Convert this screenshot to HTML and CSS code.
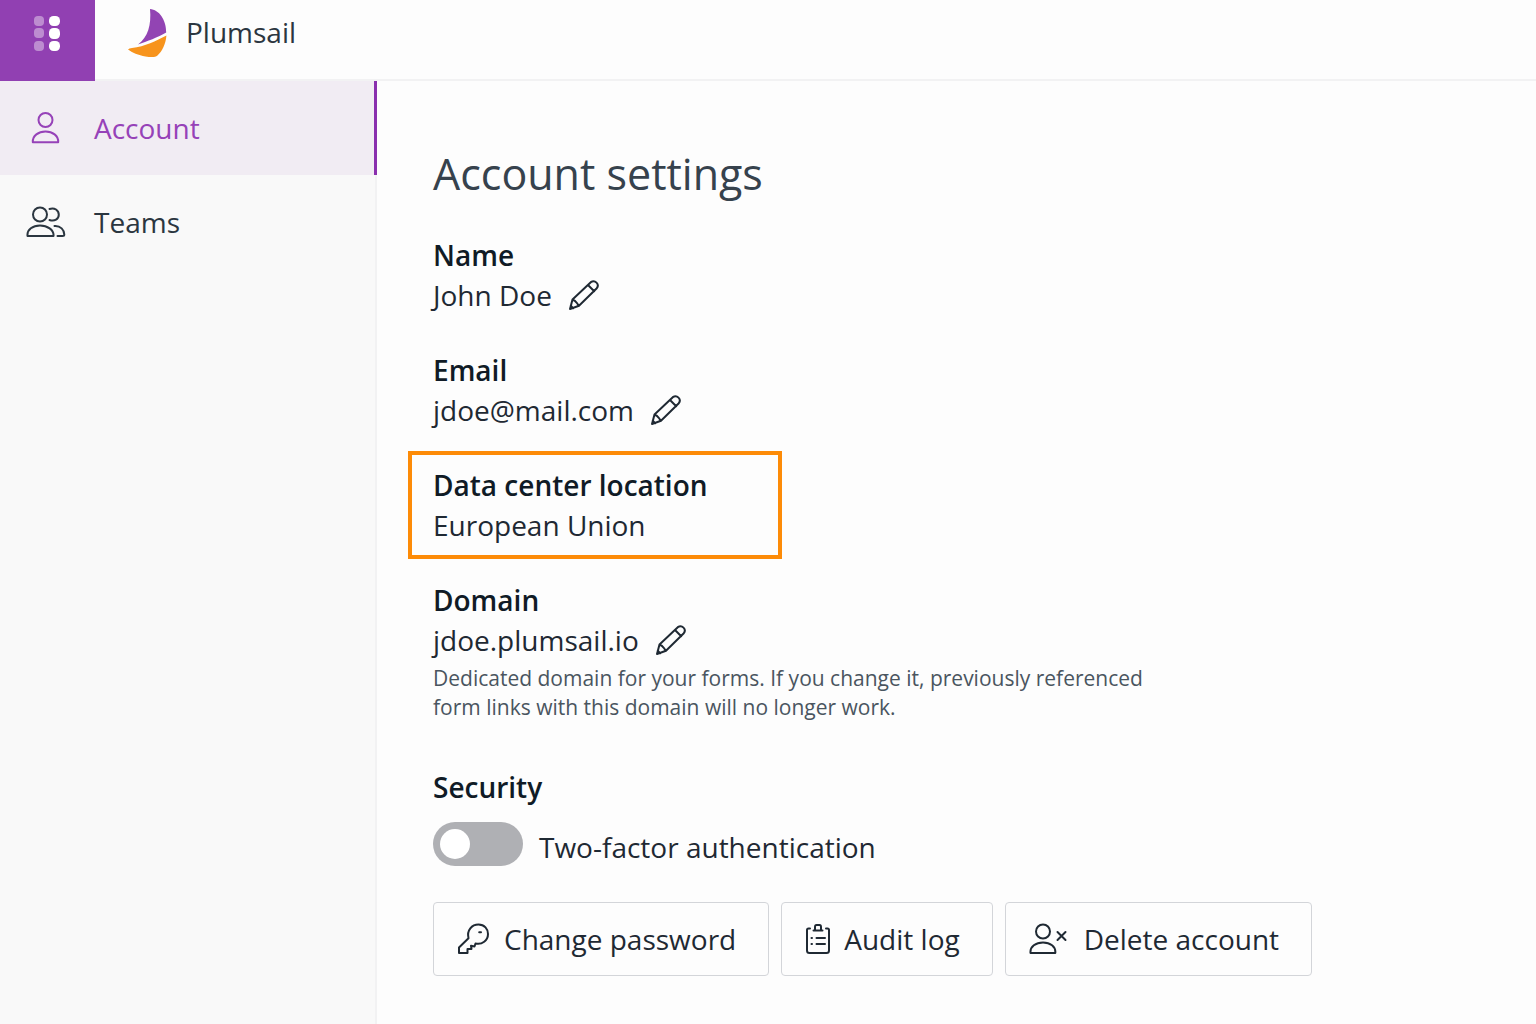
FILE: index.html
```html
<!DOCTYPE html>
<html lang="en">
<head>
<meta charset="utf-8">
<meta name="viewport" content="width=device-width, initial-scale=1">
<title>Account settings - Plumsail</title>
<link rel="stylesheet" href="styles.css">
</head>
<body>
<div class="app">
  <header class="topbar">
    <button class="launcher" type="button" aria-label="Apps">
      <svg width="28" height="36" viewBox="0 0 28 36" fill="#fff" aria-hidden="true">
        <g opacity=".4"><rect x="1" y="0" width="10" height="10" rx="4"/><rect x="1" y="12" width="10" height="10" rx="4"/><rect x="1" y="25" width="10" height="10" rx="4"/></g>
        <rect x="16" y="0" width="11" height="10" rx="4.500"/><rect x="16" y="12" width="11" height="11" rx="4.500"/><rect x="16" y="25" width="11" height="10" rx="4.500"/>
      </svg>
    </button>
    <a class="brand" href="#">
      <svg width="40" height="50" viewBox="0 0 40 50" aria-hidden="true">
        <path d="M22 1C31 1.500 38.500 12 38.200 24.600C30 29.500 19 33.500 10 36.400C20 29 23.500 17 22 1Z" fill="#9244b3"/>
        <path d="M38.400 27.500C37.800 36 34 43.500 29.500 47.500C27 49.700 22 49 17.500 48.400C10.500 47.500 4 44.500 0 41.500Q1 40.300 4 40C17 38.500 28 33 38.400 27.500Z" fill="#f7941d"/>
      </svg>
      <span>Plumsail</span>
    </a>
  </header>
  <nav class="sidebar" aria-label="Main">
    <a class="nav-item active" href="#" aria-current="page">
      <svg class="nav-icon" width="40" height="32" viewBox="0 0 40 32" aria-hidden="true"><circle cx="19.500" cy="8" r="7"/><path d="M6.800 30.200C6.400 23.500 12.500 19.500 19.500 19.500S32.600 23.500 32.200 30.200Z"/></svg>
      <span>Account</span>
    </a>
    <a class="nav-item" href="#">
      <svg class="nav-icon" width="40" height="32" viewBox="0 0 40 32" aria-hidden="true"><circle cx="14" cy="8.500" r="7"/><path d="M1.500 30C.8 23.500 7 19.500 14 19.500S28.200 23.500 27.500 30Z"/><path d="M23.500 3C28.500 1 32.800 4.500 32.800 8.800C32.800 13 28.500 15.800 23.500 14M28.500 20C34.500 19.500 38.300 24 38.300 28.500Q38.300 30 36.500 30H31.500"/></svg>
      <span>Teams</span>
    </a>
  </nav>
  <main class="content">
    <h1>Account settings</h1>
    <dl class="fields">
      <div class="field">
        <dt>Name</dt>
        <dd><span>John Doe</span><button class="edit" type="button" aria-label="Edit name"><svg width="32" height="32" viewBox="0 0 32 32" aria-hidden="true"><path d="M2 30L4.500 20.500L22.800 3.200C27 .5 31.800 5 28.800 9.200L11 26.800ZM20 6L26.200 12.200M4.500 20.500C8 21.500 8 23 11 26.800M2.800 26.800L5.200 29.200"/></svg></button></dd>
      </div>
      <div class="field">
        <dt>Email</dt>
        <dd><span>jdoe@mail.com</span><button class="edit" type="button" aria-label="Edit email"><svg width="32" height="32" viewBox="0 0 32 32" aria-hidden="true"><path d="M2 30L4.500 20.500L22.800 3.200C27 .5 31.800 5 28.800 9.200L11 26.800ZM20 6L26.200 12.200M4.500 20.500C8 21.500 8 23 11 26.800M2.800 26.800L5.200 29.200"/></svg></button></dd>
      </div>
      <div class="field highlighted">
        <dt>Data center location</dt>
        <dd><span>European Union</span></dd>
      </div>
      <div class="field">
        <dt>Domain</dt>
        <dd><span>jdoe.plumsail.io</span><button class="edit" type="button" aria-label="Edit domain"><svg width="32" height="32" viewBox="0 0 32 32" aria-hidden="true"><path d="M2 30L4.500 20.500L22.800 3.200C27 .5 31.800 5 28.800 9.200L11 26.800ZM20 6L26.200 12.200M4.500 20.500C8 21.500 8 23 11 26.800M2.800 26.800L5.200 29.200"/></svg></button></dd>
        <dd class="hint">Dedicated domain for your forms. If you change it, previously referenced form links with this domain will no longer work.</dd>
      </div>
    </dl>
    <section class="security">
      <h2>Security</h2>
      <div class="switch-row">
        <input class="switch" type="checkbox" role="switch" id="two-factor">
        <label for="two-factor">Two-factor authentication</label>
      </div>
      <div class="actions">
        <button class="action" type="button">
          <svg width="32" height="32" viewBox="0 0 32 32" aria-hidden="true"><path d="M11.500 15.200C9.500 7 15 1.500 21.500 1.500C27.500 1.500 31 6 31 11C31 17.500 25 22 18.500 20.500L17.500 23.500L14 22.800L14.500 26H10.500V30H2V24.500Z"/><path d="M22.200 9.300H24"/></svg>
          <span>Change password</span>
        </button>
        <button class="action log" type="button">
          <svg width="26" height="32" viewBox="0 0 26 32" aria-hidden="true"><path d="M5 5.500H3.500Q2 5.500 2 7V27.500Q2 30 4.500 30H21.500Q24 30 24 27.500V7Q24 5.500 22.500 5.500H21M8.500 7.500H17.500M10 7V4Q10 2 11.500 2H14.500Q16 2 16 4V7M11.500 15H20M11.500 21H20M6.500 15H7M6.500 21H7"/></svg>
          <span>Audit log</span>
        </button>
        <button class="action" type="button">
          <svg width="40" height="32" viewBox="0 0 40 32" aria-hidden="true"><circle cx="14" cy="8.500" r="7"/><path d="M1.500 30C.8 23.500 7 19.500 14 19.500S27 23.500 26.300 30Z"/><path d="M28.500 9L36.500 17M36.500 9L28.500 17"/></svg>
          <span>Delete account</span>
        </button>
      </div>
    </section>
  </main>
</div>
</body>
</html>
```
FILE: styles.css
```css
* { box-sizing: border-box; }

body {
  margin: 0;
  background: #fdfdfd;
  color: #1f2933;
  font: 400 28px/40px "Open Sans", "Noto Sans", sans-serif;
}

h1, h2, dl, dd { margin: 0; }
button { font: inherit; color: inherit; cursor: pointer; }
a { color: inherit; text-decoration: none; }
svg { display: block; flex: none; fill: none; stroke: currentColor; stroke-width: 2; stroke-linejoin: round; stroke-linecap: round; }

.app {
  min-height: 100vh;
  display: grid;
  grid-template-columns: 377px minmax(0, 1fr);
  grid-template-rows: auto 1fr;
}

.topbar {
  grid-column: 1 / -1;
  display: flex;
  height: 81px;
  background: linear-gradient(#f2f2f3, #f2f2f3) bottom / 100% 2px no-repeat;
}

.launcher {
  width: 95px;
  padding: 16px 33px;
  display: flex;
  align-items: flex-start;
  border: 0;
  background: #9140b2;
}
.launcher svg { fill: #fff; stroke: none; }

.brand {
  display: flex;
  align-items: flex-start;
  gap: 18px;
  padding: 8px 33px;
  color: #2b3640;
}
.brand svg { stroke: none; }
.brand span { padding-top: 4px; }

.sidebar {
  background: #f9f9f9;
  border-right: 2px solid #f2f2f3;
}
.nav-item {
  height: 94px;
  display: flex;
  align-items: center;
  gap: 28px;
  padding-left: 26px;
  color: #2b3640;
}
.nav-item.active {
  margin-right: -2px;
  color: #9642b8;
  background: #f1ecf3;
  border-right: 3px solid #8a2fae;
}

.content { padding: 64px 56px 48px; }

h1 {
  margin-bottom: 32px;
  font-weight: 400;
  font-size: 43px;
  line-height: 58px;
  color: #36424d;
}

.fields {
  display: flex;
  flex-direction: column;
  align-items: flex-start;
  gap: 35px;
}
dt, h2 {
  font-size: 28px;
  line-height: 40px;
  font-weight: 600;
  color: #101b26;
}
dd {
  display: flex;
  align-items: center;
  gap: 16px;
}
.edit {
  padding: 0;
  border: 0;
  background: none;
}
.highlighted {
  width: 374px;
  margin: -14px -25px;
  padding: 10px 21px;
  border: 4px solid #fd8b07;
}
.hint {
  max-width: 760px;
  padding-top: 4px;
  font-size: 21px;
  line-height: 29px;
  color: #4a5560;
}

.security { margin-top: 45px; }
.switch-row {
  display: flex;
  align-items: flex-start;
  gap: 16px;
  margin-top: 15px;
}
.switch-row label { line-height: 50px; }
.switch {
  appearance: none;
  flex: none;
  width: 90px;
  height: 44px;
  margin: 0;
  padding: 7px;
  border-radius: 22px;
  background: #afb0b4;
  cursor: pointer;
}
.switch::before {
  content: "";
  display: block;
  width: 30px;
  height: 30px;
  border-radius: 50%;
  background: #fff;
}
.switch:checked { background: #9140b2; }
.switch:checked::before { margin-left: auto; }

.actions {
  display: flex;
  flex-wrap: wrap;
  gap: 12px;
  margin-top: 30px;
}
.action {
  height: 74px;
  display: flex;
  align-items: center;
  gap: 15px;
  padding: 0 32px 0 23px;
  border: 1px solid #d3d5d9;
  border-radius: 4px;
  background: #fdfdfd;
}
.action.log { gap: 13px; }
```
